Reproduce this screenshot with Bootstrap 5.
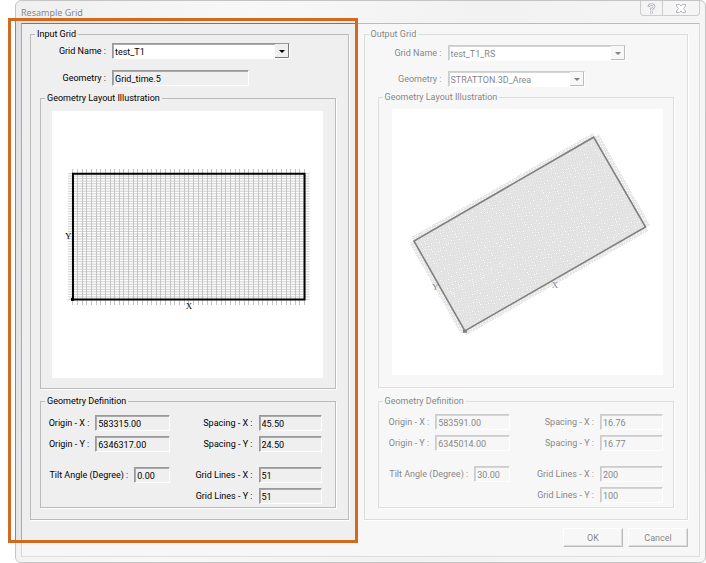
<!DOCTYPE html>
<html lang="en">
<head>
<meta charset="utf-8">
<meta name="viewport" content="width=device-width, initial-scale=1">
<title>Resample Grid</title>
<link href="https://cdn.jsdelivr.net/npm/bootstrap@5.3.0/dist/css/bootstrap.min.css" rel="stylesheet">
<style>
  body { font: 9px/12px Roboto, "Liberation Sans", sans-serif; color: #000; background: #fff; overflow: hidden; }
  .dlg { margin-left: 15px; padding: 0 5px 5px; border: 1px solid #888; border-radius: 6px; background: linear-gradient(100deg, #e0e0e2, #f0f0f1 30%, #e4e4e6 60%, #eeeeef); }
  .dlg-title { height: 22px; font: 9px/12px "Noto Sans", "Open Sans", sans-serif; }
  .dlg-title h1 { font: inherit; margin: 0; padding-top: 6px; }
  .caption-btns { height: 15px; border: 1px solid #999; border-top: 0; border-radius: 0 0 4px 4px; }
  .caption-btns button { border: 0; background: none; padding: 0; width: 36px; height: 14px; }
  .caption-btns button:first-child { width: 22px; border-right: 1px solid #999; }
  .caption-btns svg { display: block; margin: auto; }
  .client { border: 1px solid #777; border-color: #777 #bbb #bbb #aaa; background: #efefef; padding: 4px 11px 9px 8px; }
  .grids { gap: 15px; }
  .side-in { flex: 319 1 0; }
  .side-out { flex: 325 1 0; }
  fieldset { --pl: 0px; border: 1px solid #bbb; box-shadow: 1px 1px 0 #fff; }
  legend { float: none; width: auto; margin: 0 0 0 calc(4px - var(--pl)); padding: 0 2px; font-size: inherit; line-height: 12px; }
  .side-in .outer { --pl: 9px; padding: 3px 12px 11px var(--pl); }
  .side-out .outer { --pl: 13px; padding: 5px 13px 11px var(--pl); }
  .name-rows { display: grid; row-gap: 11px; column-gap: 6px; align-items: center; margin-bottom: 6px; }
  .side-in .name-rows { grid-template-columns: 66px 1fr; }
  .side-out .name-rows { grid-template-columns: 64px 1fr; row-gap: 10px; margin-bottom: 4px; }
  .name-rows label { text-align: right; }
  .box { height: 16px; font: inherit; color: inherit; border: 1px solid; border-color: #999 #fff #fff #999; box-shadow: inset 1px 1px 0 #aaa; border-radius: 0; background: #efefef; padding: 1px 2px 0; }
  .pick { position: relative; height: 16px; }
  .pick .box { display: block; width: 100%; appearance: none; background: #fff; }
  .pick svg { position: absolute; right: 1px; top: 1px; pointer-events: none; }
  .w-name { width: 178px; }
  .w-geo { width: 137px; }
  .illus { --pl: 11px; padding: 7px 12px 10px var(--pl); margin-bottom: 6px; }
  .side-out .illus { --pl: 13px; padding: 6px 10px 12px var(--pl); margin-bottom: 7px; }
  .illus svg { display: block; width: 100%; height: 267px; background: #fff; font-family: "Liberation Serif", serif; font-size: 9px; }
  .side-out .illus svg { height: 266px; }
  .defs { padding: 8px 13px 3px 0; }
  .side-out .defs { padding: 7px 10px 4px 1px; }
  .defs > div { gap: 5px; }
  .c1 { flex: 130 1 0; }
  .c2 { flex: 152 1 0; }
  .fld { gap: 6px; }
  .tilt { margin-top: 10px; }
  .w-org { width: 75px; }
  .w-sp { width: 63px; }
  .w-tilt { width: 36px; }
  .actions { margin-top: 8px; gap: 5px; }
  .push { width: 60px; height: 19px; padding: 0; font: inherit; color: inherit; background: #efefef; border: 1px solid; border-color: #fff #777 #777 #fff; box-shadow: inset -1px -1px 0 #bbb; }
  .spot { position: absolute; inset: -10px -9px -23px -22px; border: 3px solid #d2691e; box-shadow: 0 0 0 2000px rgba(255,255,255,.5); pointer-events: none; z-index: 5; }
</style>
<script src="https://cdn.jsdelivr.net/npm/bootstrap@5.3.0/dist/js/bootstrap.bundle.min.js"></script>
</head>
<body>
<main class="dlg">
  <header class="dlg-title d-flex justify-content-between align-items-start">
    <h1>Resample Grid</h1>
    <div class="caption-btns d-flex">
      <button type="button" aria-label="Help"><svg width="9" height="11" viewBox="0 0 9 11"><path d="M2 4V3Q2 1.500 4.500 1.500T7 3.500Q7 5 4.500 6V7.500M4.500 8.500V10.500" fill="none" stroke="#667" stroke-width="2.600"/><path d="M2 3.500Q2 1.500 4.500 1.500T7 3.500Q7 5 4.500 6V7.500M4.500 8.800V10.200" fill="none" stroke="#fff" stroke-width="1"/></svg></button>
      <button type="button" aria-label="Close"><svg width="10" height="9" viewBox="0 0 10 9"><path d="M.5 .5H3.500L5 2 6.500 .5H9.500V2L7.500 4.500 9.500 7V8.500H6.500L5 7 3.500 8.500H.5V7L2.500 4.500 .5 2Z" fill="#fff" stroke="#667"/></svg></button>
    </div>
  </header>
  <div class="client">
    <div class="grids d-flex">
      <section class="side-in position-relative">
        <fieldset class="outer">
          <legend>Input Grid</legend>
          <div class="name-rows">
            <label for="in-name">Grid Name :</label>
            <div class="pick w-name"><select id="in-name" class="box"><option>test_T1</option></select><svg width="14" height="14"><path d="M0 0H14V14H0Z" fill="#efefef"/><path d="M0 13.500H13.500V0" fill="none" stroke="#777"/><path d="M4 6H10L7 9Z"/></svg></div>
            <label for="in-geo">Geometry :</label>
            <input id="in-geo" class="box w-geo" value="Grid_time.5" readonly>
          </div>
          <fieldset class="illus">
            <legend>Geometry Layout Illustration</legend>
            <svg viewBox="0 0 271 267" role="img" aria-label="Input grid layout">
              <path id="gh" fill="none" stroke="#cfcfcf"/>
              <path id="gv" fill="none" stroke="#c4c4c4" shape-rendering="crispEdges"/>
              <path d="M21 62.500H253V188.500H21Z" fill="none" stroke="#000" stroke-width="2"/>
              <path d="M19 187H22V190H19Z"/>
              <text x="13" y="128">Y</text><text x="134" y="198">X</text>
            </svg>
          </fieldset>
          <fieldset>
            <legend>Geometry Definition</legend>
            <div class="defs d-flex">
              <div class="c1 d-flex flex-column">
                <div class="fld d-flex justify-content-end align-items-center"><label for="iox">Origin - X :</label><input id="iox" class="box w-org" value="583315.00" readonly></div>
                <div class="fld d-flex justify-content-end align-items-center"><label for="ioy">Origin - Y :</label><input id="ioy" class="box w-org" value="6346317.00" readonly></div>
                <div class="fld tilt d-flex justify-content-end align-items-center"><label for="ita">Tilt Angle (Degree) :</label><input id="ita" class="box w-tilt" value="0.00" readonly></div>
              </div>
              <div class="c2 d-flex flex-column">
                <div class="fld d-flex justify-content-end align-items-center"><label for="isx">Spacing - X :</label><input id="isx" class="box w-sp" value="45.50" readonly></div>
                <div class="fld d-flex justify-content-end align-items-center"><label for="isy">Spacing - Y :</label><input id="isy" class="box w-sp" value="24.50" readonly></div>
                <div class="fld tilt d-flex justify-content-end align-items-center"><label for="igx">Grid Lines - X :</label><input id="igx" class="box w-sp" value="51" readonly></div>
                <div class="fld d-flex justify-content-end align-items-center"><label for="igy">Grid Lines - Y :</label><input id="igy" class="box w-sp" value="51" readonly></div>
              </div>
            </div>
          </fieldset>
        </fieldset>
        <div class="spot"></div>
      </section>
      <section class="side-out">
        <fieldset class="outer">
          <legend>Output Grid</legend>
          <div class="name-rows">
            <label for="out-name">Grid Name :</label>
            <div class="pick w-name"><select id="out-name" class="box"><option>test_T1_RS</option></select><svg width="14" height="14"><path d="M0 0H14V14H0Z" fill="#efefef"/><path d="M0 13.500H13.500V0" fill="none" stroke="#777"/><path d="M4 6H10L7 9Z"/></svg></div>
            <label for="out-geo">Geometry :</label>
            <div class="pick w-geo"><select id="out-geo" class="box"><option>STRATTON.3D_Area</option></select><svg width="14" height="14"><path d="M0 0H14V14H0Z" fill="#efefef"/><path d="M0 13.500H13.500V0" fill="none" stroke="#777"/><path d="M4 6H10L7 9Z"/></svg></div>
          </div>
          <fieldset class="illus">
            <legend>Geometry Layout Illustration</legend>
            <svg viewBox="0 0 272 266" role="img" aria-label="Output grid layout">
              <path id="gr" fill="none" stroke="#bdbdbd" stroke-width=".7" shape-rendering="crispEdges"/>
              <path d="M202 28L254 118 73 222 22 132Z" fill="none" stroke="#000" stroke-width="1.600"/>
              <path d="M71 221H75V224H71Z"/>
              <text x="40" y="181">Y</text><text x="160" y="179">X</text>
            </svg>
          </fieldset>
          <fieldset>
            <legend>Geometry Definition</legend>
            <div class="defs d-flex">
              <div class="c1 d-flex flex-column">
                <div class="fld d-flex justify-content-end align-items-center"><label for="oox">Origin - X :</label><input id="oox" class="box w-org" value="583591.00" readonly></div>
                <div class="fld d-flex justify-content-end align-items-center"><label for="ooy">Origin - Y :</label><input id="ooy" class="box w-org" value="6345014.00" readonly></div>
                <div class="fld tilt d-flex justify-content-end align-items-center"><label for="ota">Tilt Angle (Degree) :</label><input id="ota" class="box w-tilt" value="30.00" readonly></div>
              </div>
              <div class="c2 d-flex flex-column">
                <div class="fld d-flex justify-content-end align-items-center"><label for="osx">Spacing - X :</label><input id="osx" class="box w-sp" value="16.76" readonly></div>
                <div class="fld d-flex justify-content-end align-items-center"><label for="osy">Spacing - Y :</label><input id="osy" class="box w-sp" value="16.77" readonly></div>
                <div class="fld tilt d-flex justify-content-end align-items-center"><label for="ogx">Grid Lines - X :</label><input id="ogx" class="box w-sp" value="200" readonly></div>
                <div class="fld d-flex justify-content-end align-items-center"><label for="ogy">Grid Lines - Y :</label><input id="ogy" class="box w-sp" value="100" readonly></div>
              </div>
            </div>
          </fieldset>
        </fieldset>
      </section>
    </div>
    <div class="actions d-flex justify-content-end">
      <button type="button" class="push">OK</button>
      <button type="button" class="push">Cancel</button>
    </div>
  </div>
</main>
<script>
  // Straight grid: 51 lines each way, overhanging the frame a little
  let dv = '', dh = '';
  for (let i = 0; i <= 50; i++) {
    dv += `M${21 + i * 232 / 50} 58V194`;
    dh += `M16 ${62.5 + i * 126 / 50}H258`;
  }
  document.getElementById('gv').setAttribute('d', dv);
  document.getElementById('gh').setAttribute('d', dh);

  // Tilted grid: 200 x 100 lines interpolated between the frame corners
  let d = '';
  const o = [73, 222], u = [181, -104], v = [-51, -90];
  const p = (a, b) => `${(o[0] + a * u[0] + b * v[0]).toFixed(1)} ${(o[1] + a * u[1] + b * v[1]).toFixed(1)}`;
  for (let i = 0; i < 200; i++) d += `M${p(i / 199, -.045)}L${p(i / 199, 1.045)}`;
  for (let i = 0; i < 100; i++) d += `M${p(-.024, i / 99)}L${p(1.024, i / 99)}`;
  document.getElementById('gr').setAttribute('d', d);
</script>
</body>
</html>
